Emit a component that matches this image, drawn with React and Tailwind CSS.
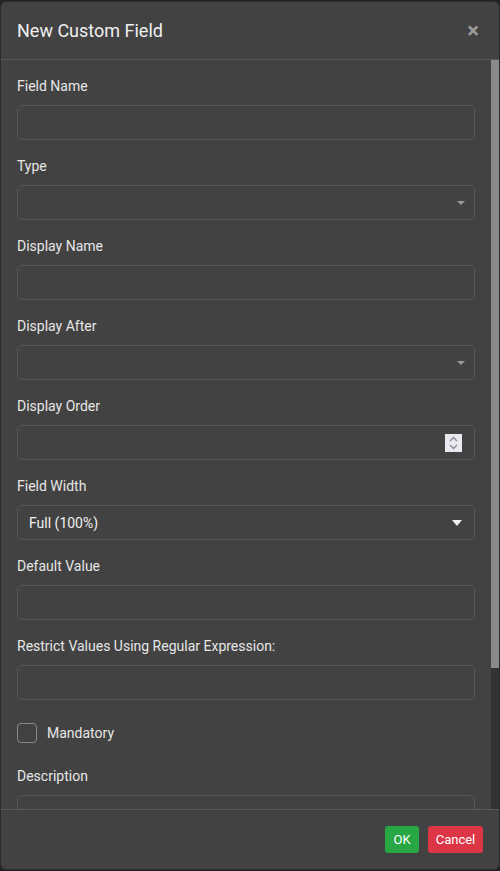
import React from 'react';

const fields = [
  { label: 'Field Name', kind: 'text' },
  { label: 'Type', kind: 'select' },
  { label: 'Display Name', kind: 'text' },
  { label: 'Display After', kind: 'select' },
  { label: 'Display Order', kind: 'number' },
  { label: 'Field Width', kind: 'width' },
  { label: 'Default Value', kind: 'text' },
  { label: 'Restrict Values Using Regular Expression:', kind: 'text' },
];

const boxCls = 'relative h-[35px] w-full rounded-[5px] border border-[#585858] bg-[#424242]';

function Caret({ light }) {
  return light ? (
    <svg className="absolute right-[12px] top-[14px]" width="10" height="6" viewBox="0 0 10 6">
      <path d="M0 0h10L5 6z" fill="#f2f2f2" />
    </svg>
  ) : (
    <svg className="absolute right-[9px] top-[15px]" width="8" height="4" viewBox="0 0 8 4">
      <path d="M0 0h8L4 4z" fill="#9a9a9a" />
    </svg>
  );
}

function Spinner() {
  return (
    <span className="absolute right-[12px] top-[8px] flex h-[18px] w-[17px] flex-col items-center justify-center bg-[#e9e9ef]">
      <svg width="9" height="14" viewBox="0 0 9 14" fill="none" stroke="#8a8a96" strokeWidth="1.3">
        <path d="M1 5l3.5-3.5L8 5" />
        <path d="M1 9l3.5 3.5L8 9" />
      </svg>
    </span>
  );
}

function Field({ label, kind }) {
  return (
    <div>
      <div className="mb-[9px] h-5 text-[14px] leading-5 text-[#e6e6e6]">{label}</div>
      <div className={boxCls}>
        {kind === 'select' && <Caret />}
        {kind === 'number' && <Spinner />}
        {kind === 'width' && (
          <>
            <span className="absolute left-[11px] top-[7px] text-[14px] leading-5 text-[#f0f0f0]">Full (100%)</span>
            <Caret light />
          </>
        )}
      </div>
    </div>
  );
}

export default function App() {
  return (
    <div className="h-[871px] w-[500px] overflow-hidden bg-[#222222] pt-px" style={{ fontFamily: 'Roboto, "Liberation Sans", sans-serif' }}>
      <div className="flex h-[869px] w-[500px] flex-col overflow-hidden rounded-[6px] border border-[#2c2c2c] bg-[#424242]">
        {/* header */}
        <div className="flex h-[58px] shrink-0 items-center justify-between border-b border-[#5a5a5a] pl-4 pr-[20px]">
          <h2 className="text-[18px] font-normal text-[#f0f0f0]">New Custom Field</h2>
          <span className="text-[22px] font-bold leading-none text-[#9c9c9c]">×</span>
        </div>

        {/* body with scroll track on the right */}
        <div className="flex min-h-0 flex-1">
          <div className="min-w-0 flex-1 overflow-hidden">
            <div className="space-y-4 px-4 pb-4 pt-4">
              {fields.map(f => (
                <Field key={f.label} {...f} />
              ))}
              <div className="flex h-[34px] items-center gap-[10px]">
                <span className="h-5 w-5 rounded-[4px] border border-[#8a8a8a]" />
                <span className="text-[14px] text-[#e6e6e6]">Mandatory</span>
              </div>
              <div>
                <div className="mb-[9px] h-5 text-[14px] leading-5 text-[#e6e6e6]">Description</div>
                <div className="h-[170px] w-full rounded-[5px] border border-[#585858]" />
              </div>
            </div>
          </div>
          <div className="flex w-2 shrink-0 flex-col bg-[#333333]">
            <div className="h-[608px] bg-[#8a8a8a]" />
          </div>
        </div>

        {/* footer */}
        <div className="flex h-[60px] shrink-0 items-center justify-end gap-[9px] border-t border-[#5a5a5a] pr-[16px]">
          <button className="h-[27px] w-[34px] rounded-[3px] bg-[#28a745] text-[13px] text-white">OK</button>
          <button className="h-[27px] w-[55px] rounded-[3px] bg-[#dc3545] text-[13px] text-white">Cancel</button>
        </div>
      </div>
    </div>
  );
}
